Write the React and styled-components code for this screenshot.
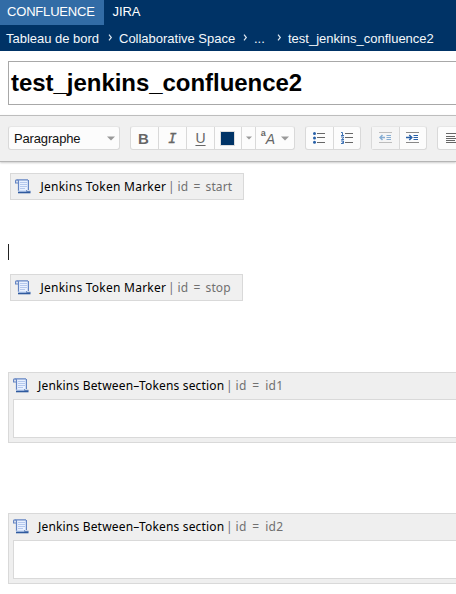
import React from "react";
import styled, { createGlobalStyle } from "styled-components";

const Global = createGlobalStyle`
  * { box-sizing: border-box; }
  body { margin: 0; background: #fff; font-family: "Liberation Sans", Arial, sans-serif; font-size: 13px; overflow: hidden; }
`;
const Page = styled.div`width: 100%; height: 594px; overflow: hidden;`;
const Header = styled.header`height: 51px; background: #003366; color: #fff;`;
const Tabs = styled.nav`display: flex; height: 25px;`;
const Tab = styled.a`
  height: 25px;
  padding: 0 9px 0 ${(p) => (p.$active ? 7 : 8.5)}px;
  width: ${(p) => (p.$active ? "104px" : "auto")};
  line-height: 24px;
  letter-spacing: ${(p) => (p.$active ? -0.18 : -0.1)}px;
  white-space: nowrap;
  background: ${(p) => (p.$active ? "#326ca6" : "transparent")};
`;
const Crumbs = styled.div`display: flex; height: 26px; line-height: 27px; padding-left: 6px; white-space: nowrap;`;
const Crumb = styled.span`width: ${(p) => p.$w}px; flex: none; color: #f4f8fc; letter-spacing: -0.01px;`;
const Chevron = styled.svg`flex: none; width: 5px; height: 7px; margin: 9px ${(p) => p.$gap}px 0 0;`;
const TitleBox = styled.div`
  margin: 10px 0 0 8px;
  height: 44px;
  border: 1px solid #a8a8a8;
  border-right: 0;
  padding-left: 2px;
  font-size: 24px;
  font-weight: bold;
  letter-spacing: -0.04px;
  line-height: 42px;
  color: #000;
  white-space: nowrap;
`;
const Toolbar = styled.div`
  margin-top: 10px;
  height: 47px;
  display: flex;
  padding: 10px 0 0 8px;
  background: #f0f0f0;
  border-top: 1px solid #bdbdbd;
  border-bottom: 1px solid #b5b5b5;
  box-shadow: 0 1px 2px #ccc;
`;
const Group = styled.div`
  display: flex;
  flex: none;
  width: ${(p) => p.$w}px;
  height: 24px;
  margin-right: ${(p) => p.$gap}px;
  background: #fcfcfc;
  border: 1px solid #d9d9d9;
  border-top-color: #e6e6e6;
  border-radius: 3px;
`;
const Button = styled.div`
  display: flex;
  align-items: center;
  justify-content: center;
  flex: ${(p) => (p.$w ? "none" : "1")};
  width: ${(p) => p.$w}px;
  color: #666;
  font-size: 16px;
  background: ${(p) => (p.$dim ? "#f5f5f5" : "transparent")};
  & + & { border-left: 1px ${(p) => (p.$dotted ? "dotted" : "solid")} #d9d9d9; }
`;
const Select = styled.div`
  display: flex;
  flex: 1;
  align-items: center;
  justify-content: space-between;
  padding: 1px 4px 0 5px;
  color: #111;
  letter-spacing: -0.15px;
`;
const Bold = styled.b`font-size: 15px; padding-right: 2px;`;
const Underlined = styled.span`font-size: 14px; text-decoration: underline; text-underline-offset: 2px;`;
const Italic = styled.i`font: italic 14px "DejaVu Sans Mono", monospace; -webkit-text-stroke: 0.3px #666;`;
const Swatch = styled.span`width: 13px; height: 13px; margin-right: 2px; background: #003366; outline: 1px solid #ddd;`;
const FontSize = styled.span`display: flex; align-items: flex-start; margin-right: 6px; height: 18px;`;
const SmallA = styled.b`font-size: 9px; line-height: 9px;`;
const LargeA = styled.i`font-size: 14px; line-height: 21px;`;
const Editor = styled.main`padding: 11px 0 0 8px;`;
const Marker = styled.div`
  display: flex;
  width: ${(p) => p.$w}px;
  height: 27px;
  margin-left: 2px;
  padding-left: 4px;
  border: 1px solid #d9d9d9;
  background: #f0f0f0;
`;
const Caret = styled.div`width: 1px; height: 16px; margin: 44px 0 14px; background: #222;`;
const Section = styled.section`
  height: 71px;
  margin-top: ${(p) => p.$top}px;
  border: 1px solid #d9d9d9;
  border-right: 0;
  background: #efefef;
  padding-left: 4px;
`;
const SectionHead = styled.div`display: flex; height: 26px;`;
const SectionBody = styled.div`height: 39px; border: 1px solid #d9d9d9; border-right: 0; background: #fff;`;
const Scroll = styled.svg`flex: none; width: 16px; height: 15px; margin-top: 5px;`;
const Label = styled.span`
  flex: none;
  width: ${(p) => p.$w}px;
  margin-left: ${(p) => p.$gap}px;
  font: 12px/25px "Noto Sans", sans-serif;
  letter-spacing: ${(p) => p.$ls || 0}px;
  word-spacing: ${(p) => p.$ws || 0}px;
  color: ${(p) => (p.$muted ? "#707070" : "#000")};
  white-space: nowrap;
`;

const Arrow = () => (
  <svg width="8" height="5" viewBox="0 0 8 5"><path d="M0 .5h8L4 4.5z" fill="#999" /></svg>
);
const SmallArrow = () => (
  <svg width="6" height="4" viewBox="0 0 6 4"><path d="M0 .5h6L3 3.5z" fill="#999" /></svg>
);
const Sep = ({ gap }) => (
  <Chevron $gap={gap} viewBox="0 0 5 7"><path d="M1 .7L3.3 3.5 1 6.3" fill="none" stroke="#dce6ef" strokeWidth="1.2" /></Chevron>
);
const ScrollIcon = () => (
  <Scroll viewBox="0 0 16 15">
    <path d="M2.5 1h11v11h-10z" fill="#e9f1ff" />
    <path d="M3.5 12V3Q3.5 .8 1.8.8.6.8.6 2.3V4H3M2 .8h11" fill="none" stroke="#6485c4" strokeWidth="1.2" />
    <path d="M13.4 1v10" fill="none" stroke="#6485c4" strokeWidth="1.2" />
    <path d="M5 3.5h7M5 5.5h7M5 7.5h7M5 9.5h5" stroke="#b4c8ed" />
    <path d="M3.5 11.3h8v1h4v1.3h-12z" fill="#c9dbf8" />
    <path d="M11.5 11.3v1h4" fill="none" stroke="#5679b5" />
    <path d="M3 13.5h12.5" stroke="#2f5a9e" strokeWidth="1.6" />
  </Scroll>
);
const Bullets = () => (
  <svg width="12" height="12" viewBox="0 0 12 12">
    <g fill="#2860a8"><circle cx="1.5" cy="1.6" r="1.5" /><circle cx="1.5" cy="5.9" r="1.5" /><circle cx="1.5" cy="10.3" r="1.5" /></g>
    <path d="M4 1.5h8M4 5.5h8M4 10.5h8" stroke="#666" />
  </svg>
);
const Numbers = () => (
  <svg width="12" height="12" viewBox="0 0 12 12">
    <path d="M0 .5h1.5V3M0 3.5h3M0 5h2.5v1L.5 7.5H3M0 9h2.5v2.5H0M1 10.2h1.5" fill="none" stroke="#3e72b5" />
    <path d="M4 1.5h8M4 5.5h8M4 10.5h8" stroke="#666" />
  </svg>
);
const Indent = ({ out }) => (
  <svg width="13" height="12" viewBox="0 0 13 12">
    <path d="M0 .5h13M0 10.5h13" stroke={out ? "#bdbdbd" : "#888"} />
    <path d="M7.5 3.5H12M7.5 5.5H12M7.5 7.5H12" stroke={out ? "#86add3" : "#2860a8"} strokeWidth="1.2" />
    <path d={out ? "M6 5.5H1M3.5 3L1 5.5 3.5 8" : "M0 5.5h5.5M3.3 3l2.5 2.5L3.3 8"} fill="none" stroke={out ? "#86add3" : "#2860a8"} strokeWidth="1.5" />
  </svg>
);
const Align = () => (
  <svg width="14" height="11" viewBox="0 0 14 11"><path d="M0 .5h14M0 3.5h9M0 5.5h14M0 7.5h9M0 9.5h14" stroke="#666" /></svg>
);
const TokenMarker = ({ id, width }) => (
  <Marker $w={width}>
    <ScrollIcon />
    <Label $gap={9.5} $w={128} $ls={0.25}>Jenkins Token Marker</Label>
    <Label $gap={-0.5} $w={7.5} $muted>|</Label>
    <Label $gap={2} $w={54} $ls={0.1} $ws={2} $muted>id = {id}</Label>
  </Marker>
);
const TokenSection = ({ id, top }) => (
  <Section $top={top}>
    <SectionHead>
      <ScrollIcon />
      <Label $gap={9} $w={188} $ls={0.18}>Jenkins Between–Tokens section</Label>
      <Label $gap={0} $w={7} $muted>|</Label>
      <Label $gap={2.5} $w={56} $ls={0.3} $ws={2.3} $muted>id = {id}</Label>
    </SectionHead>
    <SectionBody />
  </Section>
);

export default function App() {
  return (
    <Page>
      <Global />
      <Header>
        <Tabs><Tab $active>CONFLUENCE</Tab><Tab>JIRA</Tab></Tabs>
        <Crumbs>
          <Crumb $w={102}>Tableau de bord</Crumb><Sep gap={6} />
          <Crumb $w={124}>Collaborative Space</Crumb><Sep gap={6} />
          <Crumb $w={23}>...</Crumb><Sep gap={6} />
          <Crumb>test_jenkins_confluence2</Crumb>
        </Crumbs>
      </Header>
      <TitleBox>test_jenkins_confluence2</TitleBox>
      <Toolbar>
        <Group $w={112} $gap={10}><Select>Paragraphe<Arrow /></Select></Group>
        <Group $w={165} $gap={10}>
          <Button $w={27}><Bold>B</Bold></Button>
          <Button $w={28}><Italic>I</Italic></Button>
          <Button $w={28}><Underlined>U</Underlined></Button>
          <Button $w={27}><Swatch /></Button>
          <Button $w={14} $dotted><SmallArrow /></Button>
          <Button><FontSize><SmallA>a</SmallA><LargeA>A</LargeA></FontSize><Arrow /></Button>
        </Group>
        <Group $w={56} $gap={10}><Button><Bullets /></Button><Button><Numbers /></Button></Group>
        <Group $w={56} $gap={10}><Button $dim><Indent out /></Button><Button><Indent /></Button></Group>
        <Group $w={56} $gap={0}><Button $w={30}><Align /></Button></Group>
      </Toolbar>
      <Editor>
        <TokenMarker id="start" width={234} />
        <Caret />
        <TokenMarker id="stop" width={233} />
        <TokenSection id="id1" top={71} />
        <TokenSection id="id2" top={70} />
      </Editor>
    </Page>
  );
}
